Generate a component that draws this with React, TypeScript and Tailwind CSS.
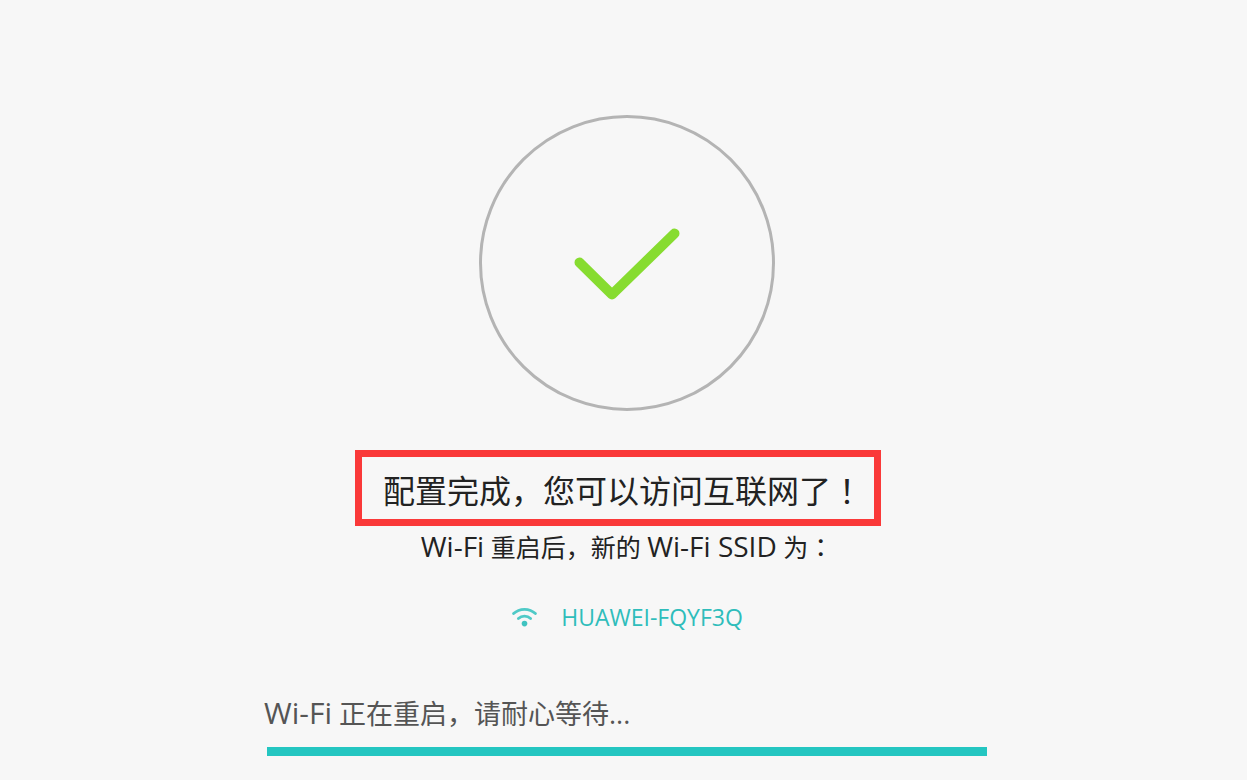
const fontStack =
  "font-['Open_Sans','Noto_Sans_CJK_SC',sans-serif]";

// Full-width marks sit in the middle of their cell
function Mark({ children }: { children: string }) {
  return <span className="font-['Noto_Sans_CJK_JP',sans-serif]">{children}</span>;
}

function SuccessIcon() {
  return (
    <svg
      className="h-[300px] w-[300px]"
      viewBox="0 0 300 300"
      fill="none"
      aria-hidden="true"
    >
      <circle cx="150" cy="150" r="146.5" stroke="#b4b4b4" strokeWidth="3" />
      <path
        d="M102.5 149.5L135 181.5L197.5 120.5"
        stroke="#87dc30"
        strokeWidth="10"
        strokeLinecap="round"
        strokeLinejoin="round"
      />
    </svg>
  );
}

function WifiIcon() {
  return (
    <svg
      className="h-5 w-[26px]"
      viewBox="0 0 26 20"
      fill="none"
      stroke="#4fcac7"
      strokeWidth="2.8"
      strokeLinecap="round"
      aria-hidden="true"
    >
      <path d="M2.6 6.6C8.4 .9 18.6 .9 24.4 6.6" />
      <path d="M7.4 11.6C10.8 8.4 16.2 8.4 19.6 11.6" />
      <circle cx="13.5" cy="16.6" r="2.8" fill="#3fc3c0" stroke="none" />
    </svg>
  );
}

export default function App() {
  return (
    <div className={`min-h-screen bg-[#f7f7f7] pt-[113px] pl-[7px] ${fontStack}`}>
      <main className="mx-auto flex max-w-[720px] flex-col">
        <div className="flex justify-center">
          <SuccessIcon />
        </div>

        {/* Result */}
        <h1 className="mt-[37px] ml-[88px] flex h-[76px] w-[526px] items-center self-start border-[7px] border-[#fa3939] pt-1 pl-[21px] text-[32px] leading-[48px] whitespace-nowrap text-[#222222]">
          <span>
            配置完成，您可以访问互联网了<Mark>！</Mark>
          </span>
        </h1>
        <p className="mt-0.5 text-center text-[25px] leading-9 text-[#222222]">
          <span className="text-[28px]">Wi-Fi</span> 重启后，新的{" "}
          <span className="text-[28px]">Wi-Fi SSID</span> 为<Mark>：</Mark>
        </p>
        <div className="mt-[34px] flex items-center justify-center gap-6 text-[#2fbdbb]">
          <WifiIcon />
          <span className="text-[23px] leading-9">HUAWEI-FQYF3Q</span>
        </div>

        {/* Restart progress */}
        <label
          htmlFor="restart"
          className="mt-[58px] -ml-[3px] text-[27px] leading-10 text-[#555555]"
        >
          <span className="text-[30px]">Wi-Fi</span> 正在重启，请耐心等待...
        </label>
        <progress
          id="restart"
          value={100}
          max={100}
          className="mt-[13px] block h-[9px] w-full appearance-none bg-[#e0e0e0] [&::-webkit-progress-bar]:bg-[#e0e0e0] [&::-webkit-progress-value]:bg-[#24c6c1]"
        />
      </main>
    </div>
  );
}
